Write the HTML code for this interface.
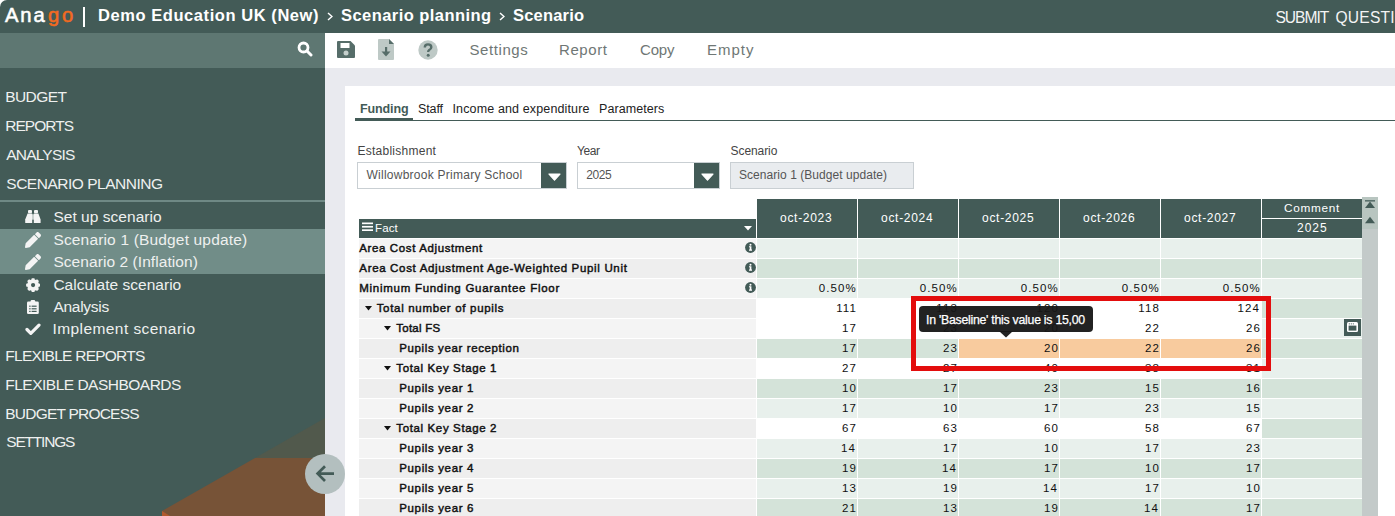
<!DOCTYPE html><html><head><meta charset="utf-8"><style>
*{margin:0;padding:0;box-sizing:border-box}
html,body{width:1395px;height:516px;overflow:hidden;background:#e9eaef;font-family:"Liberation Sans", sans-serif}
.a{position:absolute}
.t{position:absolute;white-space:nowrap;line-height:1}
</style></head><body>
<div class="a" style="left:0px;top:0px;width:10px;height:10px;background:#ffffff;"></div>
<div class="a" style="left:0px;top:0px;width:1395px;height:33px;background:#435b57;border-top-left-radius:7px"></div>
<div class="t" style="left:4.90px;top:4.70px;font-size:20.2px;color:#fff;font-weight:normal;letter-spacing:2.004px;-webkit-text-stroke:0.55px #fff">Ana</div>
<div class="t" style="left:47.90px;top:4.70px;font-size:20.2px;color:#f36a21;font-weight:normal;letter-spacing:2.973px;-webkit-text-stroke:0.55px #f36a21">go</div>
<div class="a" style="left:83px;top:7px;width:2px;height:20px;background:#fff;"></div>
<div class="t" style="left:98.00px;top:6.75px;font-size:16.5px;color:#fff;font-weight:bold;letter-spacing:0.564px;">Demo Education UK (New)</div>
<div class="t" style="left:341.00px;top:6.75px;font-size:16.5px;color:#fff;font-weight:bold;letter-spacing:0.441px;">Scenario planning</div>
<div class="t" style="left:513.00px;top:6.75px;font-size:16.5px;color:#fff;font-weight:bold;letter-spacing:0.197px;">Scenario</div>
<svg class="a" style="left:327px;top:12px" width="6" height="9" viewBox="0 0 6 9"><path d="M1 1 L5 4.5 L1 8" fill="none" stroke="#fff" stroke-width="1.5"/></svg>
<svg class="a" style="left:499px;top:12px" width="6" height="9" viewBox="0 0 6 9"><path d="M1 1 L5 4.5 L1 8" fill="none" stroke="#fff" stroke-width="1.5"/></svg>
<div class="t" style="left:1275.50px;top:9.70px;font-size:15.6px;color:#f4f4f4;font-weight:normal;letter-spacing:-1.037px;">SUBMIT</div>
<div class="t" style="left:1335.50px;top:9.70px;font-size:15.6px;color:#f4f4f4;font-weight:normal;letter-spacing:0.200px;">QUESTION</div>
<div class="a" style="left:0px;top:33px;width:325px;height:483px;background:#435b57;"></div>
<div class="a" style="left:0px;top:33px;width:325px;height:35px;background:#5e7772;"></div>
<svg class="a" style="left:297px;top:41px" width="16" height="16" viewBox="0 0 16 16"><circle cx="6.5" cy="6.5" r="4.5" fill="none" stroke="#fff" stroke-width="2.8"/><line x1="10" y1="10" x2="14" y2="14" stroke="#fff" stroke-width="3" stroke-linecap="round"/></svg>
<div class="t" style="left:5.30px;top:89.05px;font-size:15.5px;color:#eef0ef;font-weight:normal;letter-spacing:-0.604px;">BUDGET</div>
<div class="t" style="left:5.30px;top:117.85px;font-size:15.5px;color:#eef0ef;font-weight:normal;letter-spacing:-0.985px;">REPORTS</div>
<div class="t" style="left:6.30px;top:146.95px;font-size:15.5px;color:#eef0ef;font-weight:normal;letter-spacing:-0.818px;">ANALYSIS</div>
<div class="t" style="left:6.30px;top:176.05px;font-size:15.5px;color:#eef0ef;font-weight:normal;letter-spacing:-0.484px;">SCENARIO PLANNING</div>
<div class="t" style="left:5.30px;top:347.65px;font-size:15.5px;color:#eef0ef;font-weight:normal;letter-spacing:-0.752px;">FLEXIBLE REPORTS</div>
<div class="t" style="left:5.30px;top:376.55px;font-size:15.5px;color:#eef0ef;font-weight:normal;letter-spacing:-0.509px;">FLEXIBLE DASHBOARDS</div>
<div class="t" style="left:5.30px;top:405.75px;font-size:15.5px;color:#eef0ef;font-weight:normal;letter-spacing:-0.781px;">BUDGET PROCESS</div>
<div class="t" style="left:6.30px;top:434.25px;font-size:15.5px;color:#eef0ef;font-weight:normal;letter-spacing:-1.210px;">SETTINGS</div>
<div class="a" style="left:0px;top:200px;width:325px;height:2px;background:#6f8985;"></div>
<div class="a" style="left:0px;top:229px;width:325px;height:45px;background:#718d88;"></div>
<div class="t" style="left:53.40px;top:208.75px;font-size:15.5px;color:#eef0ef;font-weight:normal;letter-spacing:0.037px;">Set up scenario</div>
<div class="t" style="left:53.40px;top:231.75px;font-size:15.5px;color:#eef0ef;font-weight:normal;letter-spacing:0.168px;">Scenario 1 (Budget update)</div>
<div class="t" style="left:53.40px;top:253.75px;font-size:15.5px;color:#eef0ef;font-weight:normal;letter-spacing:0.069px;">Scenario 2 (Inflation)</div>
<div class="t" style="left:53.40px;top:276.65px;font-size:15.5px;color:#eef0ef;font-weight:normal;letter-spacing:0.018px;">Calculate scenario</div>
<div class="t" style="left:53.40px;top:298.95px;font-size:15.5px;color:#eef0ef;font-weight:normal;letter-spacing:-0.281px;">Analysis</div>
<div class="t" style="left:52.40px;top:321.45px;font-size:15.5px;color:#eef0ef;font-weight:normal;letter-spacing:0.433px;">Implement scenario</div>
<svg class="a" style="left:0;top:33px" width="325" height="483" viewBox="0 33 325 483"><polygon points="255,458 325,418 325,458" fill="#51594c"/><polygon points="162,511 255,458 325,458 325,516 162,516" fill="#775337"/><polygon points="162,511 170,516 162,516" fill="#b0592e"/></svg>
<div class="a" style="left:305px;top:454px;width:40px;height:40px;border-radius:50%;background:#b3bfbf"></div>
<svg class="a" style="left:314px;top:463px" width="22" height="22" viewBox="0 0 22 22"><path d="M11 3.2 L3.6 10.6 L11 18 M3.6 10.6 L20 10.6" fill="none" stroke="#435b57" stroke-width="2.7"/></svg>
<div class="a" style="left:325px;top:33px;width:1070px;height:35px;background:#fff;"></div>
<div class="t" style="left:469.50px;top:41.90px;font-size:15px;color:#6f7775;font-weight:normal;letter-spacing:0.586px;">Settings</div>
<div class="t" style="left:559.00px;top:41.90px;font-size:15px;color:#6f7775;font-weight:normal;letter-spacing:0.589px;">Report</div>
<div class="t" style="left:640.00px;top:41.90px;font-size:15px;color:#6f7775;font-weight:normal;letter-spacing:-0.172px;">Copy</div>
<div class="t" style="left:707.00px;top:41.90px;font-size:15px;color:#6f7775;font-weight:normal;letter-spacing:0.998px;">Empty</div>
<div class="a" style="left:345px;top:86px;width:1050px;height:430px;background:#fff;"></div>
<div class="t" style="left:360.00px;top:103.05px;font-size:12.5px;color:#435b57;font-weight:bold;letter-spacing:-0.108px;">Funding</div>
<div class="t" style="left:418.00px;top:103.05px;font-size:12.5px;color:#222;font-weight:normal;letter-spacing:-0.127px;">Staff</div>
<div class="t" style="left:452.50px;top:103.05px;font-size:12.5px;color:#222;font-weight:normal;letter-spacing:0.135px;">Income and expenditure</div>
<div class="t" style="left:599.00px;top:103.05px;font-size:12.5px;color:#222;font-weight:normal;letter-spacing:0.072px;">Parameters</div>
<div class="a" style="left:355px;top:120px;width:1040px;height:1px;background:#435b57;"></div>
<div class="a" style="left:355px;top:118px;width:58px;height:3px;background:#435b57;"></div>
<div class="t" style="left:357.40px;top:145.00px;font-size:12px;color:#444;font-weight:normal;letter-spacing:0.264px;">Establishment</div>
<div class="t" style="left:577.00px;top:145.00px;font-size:12px;color:#444;font-weight:normal;letter-spacing:-0.383px;">Year</div>
<div class="t" style="left:730.60px;top:145.00px;font-size:12px;color:#444;font-weight:normal;letter-spacing:-0.084px;">Scenario</div>
<div class="a" style="left:357px;top:162px;width:210px;height:27px;border:1px solid #c9cfd3;background:#fff"></div>
<div class="a" style="left:541px;top:163px;width:25px;height:25px;background:#435b57;"></div>
<svg class="a" style="left:547.5px;top:173px" width="13" height="9" viewBox="0 0 13 9"><polygon points="1,1 12,1 6.5,7.2" fill="#fff" stroke="#fff" stroke-width="1.2" stroke-linejoin="round"/></svg>
<div class="a" style="left:577px;top:162px;width:143px;height:27px;border:1px solid #c9cfd3;background:#fff"></div>
<div class="a" style="left:694px;top:163px;width:25px;height:25px;background:#435b57;"></div>
<svg class="a" style="left:700.5px;top:173px" width="13" height="9" viewBox="0 0 13 9"><polygon points="1,1 12,1 6.5,7.2" fill="#fff" stroke="#fff" stroke-width="1.2" stroke-linejoin="round"/></svg>
<div class="a" style="left:730px;top:162px;width:184px;height:27px;border:1px solid #c9cfd3;background:#e9ecef"></div>
<div class="t" style="left:366.50px;top:169.20px;font-size:12px;color:#555;font-weight:normal;letter-spacing:0.252px;">Willowbrook Primary School</div>
<div class="t" style="left:586.30px;top:169.20px;font-size:12px;color:#555;font-weight:normal;letter-spacing:-0.440px;">2025</div>
<div class="t" style="left:739.00px;top:169.20px;font-size:12px;color:#555;font-weight:normal;letter-spacing:0.049px;">Scenario 1 (Budget update)</div>
<div class="a" style="left:359px;top:219px;width:397px;height:19px;background:#435b57;"></div>
<svg class="a" style="left:362px;top:222px" width="11" height="9" viewBox="0 0 11 9"><rect x="0" y="0.5" width="11" height="1.7" fill="#fff"/><rect x="0" y="3.9" width="11" height="1.7" fill="#fff"/><rect x="0" y="7.3" width="11" height="1.7" fill="#fff"/></svg>
<div class="t" style="left:375.10px;top:223.25px;font-size:11.5px;color:#fff;font-weight:normal;letter-spacing:0.110px;">Fact</div>
<svg class="a" style="left:744px;top:226px" width="8" height="5" viewBox="0 0 8 5"><polygon points="0,0 8,0 4,4.5" fill="#fff"/></svg>
<div class="a" style="left:757px;top:199px;width:100px;height:39px;background:#435b57;"></div>
<div class="t" style="left:780.00px;top:212.10px;font-size:12px;color:#fff;font-weight:normal;letter-spacing:0.711px;">oct-2023</div>
<div class="a" style="left:858px;top:199px;width:100px;height:39px;background:#435b57;"></div>
<div class="t" style="left:881.00px;top:212.10px;font-size:12px;color:#fff;font-weight:normal;letter-spacing:0.711px;">oct-2024</div>
<div class="a" style="left:959px;top:199px;width:100px;height:39px;background:#435b57;"></div>
<div class="t" style="left:982.00px;top:212.10px;font-size:12px;color:#fff;font-weight:normal;letter-spacing:0.711px;">oct-2025</div>
<div class="a" style="left:1060px;top:199px;width:100px;height:39px;background:#435b57;"></div>
<div class="t" style="left:1083.00px;top:212.10px;font-size:12px;color:#fff;font-weight:normal;letter-spacing:0.711px;">oct-2026</div>
<div class="a" style="left:1161px;top:199px;width:100px;height:39px;background:#435b57;"></div>
<div class="t" style="left:1184.00px;top:212.10px;font-size:12px;color:#fff;font-weight:normal;letter-spacing:0.711px;">oct-2027</div>
<div class="a" style="left:1262px;top:199px;width:100px;height:19px;background:#435b57;"></div>
<div class="a" style="left:1262px;top:219px;width:100px;height:19px;background:#435b57;"></div>
<div class="t" style="left:1284.00px;top:203.10px;font-size:11.8px;color:#fff;font-weight:normal;letter-spacing:0.691px;">Comment</div>
<div class="t" style="left:1297.00px;top:222.20px;font-size:12px;color:#fff;font-weight:normal;letter-spacing:0.993px;">2025</div>
<div class="a" style="left:359px;top:239px;width:397px;height:19px;background:#f4f4f4;"></div>
<div class="a" style="left:757px;top:239px;width:100px;height:19px;background:#e8f0ec;"></div>
<div class="a" style="left:858px;top:239px;width:100px;height:19px;background:#e8f0ec;"></div>
<div class="a" style="left:959px;top:239px;width:100px;height:19px;background:#e8f0ec;"></div>
<div class="a" style="left:1060px;top:239px;width:100px;height:19px;background:#e8f0ec;"></div>
<div class="a" style="left:1161px;top:239px;width:100px;height:19px;background:#e8f0ec;"></div>
<div class="a" style="left:1262px;top:239px;width:100px;height:19px;background:#e8f0ec;"></div>
<svg class="a" style="left:745px;top:242.2px" width="11" height="11" viewBox="0 0 11 11"><circle cx="5.5" cy="5.5" r="5.4" fill="#435b57"/><path d="M4 4.2 H6.4 V7.6 H7 V8.7 H4 V7.6 H4.7 V5.3 H4 Z" fill="#fff"/><circle cx="5.5" cy="2.7" r="1" fill="#fff"/></svg>
<div class="t" style="left:359.30px;top:243.45px;font-size:11.5px;color:#111;font-weight:normal;letter-spacing:0.618px;-webkit-text-stroke:0.45px #111">Area Cost Adjustment</div>
<div class="a" style="left:359px;top:259px;width:397px;height:19px;background:#eeeeee;"></div>
<div class="a" style="left:757px;top:259px;width:100px;height:19px;background:#d4e3d9;"></div>
<div class="a" style="left:858px;top:259px;width:100px;height:19px;background:#d4e3d9;"></div>
<div class="a" style="left:959px;top:259px;width:100px;height:19px;background:#d4e3d9;"></div>
<div class="a" style="left:1060px;top:259px;width:100px;height:19px;background:#d4e3d9;"></div>
<div class="a" style="left:1161px;top:259px;width:100px;height:19px;background:#d4e3d9;"></div>
<div class="a" style="left:1262px;top:259px;width:100px;height:19px;background:#d4e3d9;"></div>
<svg class="a" style="left:745px;top:262.2px" width="11" height="11" viewBox="0 0 11 11"><circle cx="5.5" cy="5.5" r="5.4" fill="#435b57"/><path d="M4 4.2 H6.4 V7.6 H7 V8.7 H4 V7.6 H4.7 V5.3 H4 Z" fill="#fff"/><circle cx="5.5" cy="2.7" r="1" fill="#fff"/></svg>
<div class="t" style="left:359.30px;top:263.45px;font-size:11.5px;color:#111;font-weight:normal;letter-spacing:0.667px;-webkit-text-stroke:0.45px #111">Area Cost Adjustment Age-Weighted Pupil Unit</div>
<div class="a" style="left:359px;top:279px;width:397px;height:19px;background:#f4f4f4;"></div>
<div class="a" style="left:757px;top:279px;width:100px;height:19px;background:#e8f0ec;"></div>
<div class="t" style="left:818.72px;top:283.05px;font-size:11.5px;color:#111;font-weight:normal;letter-spacing:1.100px;">0.50%</div>
<div class="a" style="left:858px;top:279px;width:100px;height:19px;background:#e8f0ec;"></div>
<div class="t" style="left:919.72px;top:283.05px;font-size:11.5px;color:#111;font-weight:normal;letter-spacing:1.100px;">0.50%</div>
<div class="a" style="left:959px;top:279px;width:100px;height:19px;background:#e8f0ec;"></div>
<div class="t" style="left:1020.72px;top:283.05px;font-size:11.5px;color:#111;font-weight:normal;letter-spacing:1.100px;">0.50%</div>
<div class="a" style="left:1060px;top:279px;width:100px;height:19px;background:#e8f0ec;"></div>
<div class="t" style="left:1121.72px;top:283.05px;font-size:11.5px;color:#111;font-weight:normal;letter-spacing:1.100px;">0.50%</div>
<div class="a" style="left:1161px;top:279px;width:100px;height:19px;background:#e8f0ec;"></div>
<div class="t" style="left:1222.72px;top:283.05px;font-size:11.5px;color:#111;font-weight:normal;letter-spacing:1.100px;">0.50%</div>
<div class="a" style="left:1262px;top:279px;width:100px;height:19px;background:#e8f0ec;"></div>
<svg class="a" style="left:745px;top:282.2px" width="11" height="11" viewBox="0 0 11 11"><circle cx="5.5" cy="5.5" r="5.4" fill="#435b57"/><path d="M4 4.2 H6.4 V7.6 H7 V8.7 H4 V7.6 H4.7 V5.3 H4 Z" fill="#fff"/><circle cx="5.5" cy="2.7" r="1" fill="#fff"/></svg>
<div class="t" style="left:359.30px;top:283.45px;font-size:11.5px;color:#111;font-weight:normal;letter-spacing:0.720px;-webkit-text-stroke:0.45px #111">Minimum Funding Guarantee Floor</div>
<div class="a" style="left:359px;top:299px;width:397px;height:19px;background:#eeeeee;"></div>
<div class="a" style="left:757px;top:299px;width:100px;height:19px;background:#ffffff;"></div>
<div class="t" style="left:836.22px;top:303.05px;font-size:11.5px;color:#111;font-weight:normal;letter-spacing:1.100px;">111</div>
<div class="a" style="left:858px;top:299px;width:100px;height:19px;background:#ffffff;"></div>
<div class="t" style="left:936.36px;top:303.05px;font-size:11.5px;color:#111;font-weight:normal;letter-spacing:1.100px;">113</div>
<div class="a" style="left:959px;top:299px;width:100px;height:19px;background:#ffffff;"></div>
<div class="t" style="left:1036.51px;top:303.05px;font-size:11.5px;color:#111;font-weight:normal;letter-spacing:1.100px;">120</div>
<div class="a" style="left:1060px;top:299px;width:100px;height:19px;background:#ffffff;"></div>
<div class="t" style="left:1138.36px;top:303.05px;font-size:11.5px;color:#111;font-weight:normal;letter-spacing:1.100px;">118</div>
<div class="a" style="left:1161px;top:299px;width:100px;height:19px;background:#ffffff;"></div>
<div class="t" style="left:1237.51px;top:303.05px;font-size:11.5px;color:#111;font-weight:normal;letter-spacing:1.100px;">124</div>
<div class="a" style="left:1262px;top:299px;width:100px;height:19px;background:#d4e3d9;"></div>
<svg class="a" style="left:364.7px;top:306px" width="7" height="5" viewBox="0 0 7 5"><polygon points="0,0 7,0 3.5,4.5" fill="#111"/></svg>
<div class="t" style="left:376.70px;top:303.45px;font-size:11.5px;color:#111;font-weight:normal;letter-spacing:0.683px;-webkit-text-stroke:0.45px #111">Total number of pupils</div>
<div class="a" style="left:359px;top:319px;width:397px;height:19px;background:#f4f4f4;"></div>
<div class="a" style="left:757px;top:319px;width:100px;height:19px;background:#ffffff;"></div>
<div class="t" style="left:842.00px;top:323.05px;font-size:11.5px;color:#111;font-weight:normal;letter-spacing:1.100px;">17</div>
<div class="a" style="left:858px;top:319px;width:100px;height:19px;background:#ffffff;"></div>
<div class="t" style="left:943.00px;top:323.05px;font-size:11.5px;color:#111;font-weight:normal;letter-spacing:1.100px;">23</div>
<div class="a" style="left:959px;top:319px;width:100px;height:19px;background:#ffffff;"></div>
<div class="t" style="left:1044.00px;top:323.05px;font-size:11.5px;color:#111;font-weight:normal;letter-spacing:1.100px;">20</div>
<div class="a" style="left:1060px;top:319px;width:100px;height:19px;background:#ffffff;"></div>
<div class="t" style="left:1145.00px;top:323.05px;font-size:11.5px;color:#111;font-weight:normal;letter-spacing:1.100px;">22</div>
<div class="a" style="left:1161px;top:319px;width:100px;height:19px;background:#ffffff;"></div>
<div class="t" style="left:1246.00px;top:323.05px;font-size:11.5px;color:#111;font-weight:normal;letter-spacing:1.100px;">26</div>
<div class="a" style="left:1262px;top:319px;width:100px;height:19px;background:#e8f0ec;"></div>
<svg class="a" style="left:384.3px;top:326px" width="7" height="5" viewBox="0 0 7 5"><polygon points="0,0 7,0 3.5,4.5" fill="#111"/></svg>
<div class="t" style="left:396.30px;top:323.45px;font-size:11.5px;color:#111;font-weight:normal;letter-spacing:0.241px;-webkit-text-stroke:0.45px #111">Total FS</div>
<div class="a" style="left:359px;top:339px;width:397px;height:19px;background:#eeeeee;"></div>
<div class="a" style="left:757px;top:339px;width:100px;height:19px;background:#d4e3d9;"></div>
<div class="t" style="left:842.00px;top:343.05px;font-size:11.5px;color:#111;font-weight:normal;letter-spacing:1.100px;">17</div>
<div class="a" style="left:858px;top:339px;width:100px;height:19px;background:#d4e3d9;"></div>
<div class="t" style="left:943.00px;top:343.05px;font-size:11.5px;color:#111;font-weight:normal;letter-spacing:1.100px;">23</div>
<div class="a" style="left:959px;top:339px;width:100px;height:19px;background:#f8cb9e;"></div>
<div class="t" style="left:1044.00px;top:343.05px;font-size:11.5px;color:#111;font-weight:normal;letter-spacing:1.100px;">20</div>
<div class="a" style="left:1060px;top:339px;width:100px;height:19px;background:#f8cb9e;"></div>
<div class="t" style="left:1145.00px;top:343.05px;font-size:11.5px;color:#111;font-weight:normal;letter-spacing:1.100px;">22</div>
<div class="a" style="left:1161px;top:339px;width:100px;height:19px;background:#f8cb9e;"></div>
<div class="t" style="left:1246.00px;top:343.05px;font-size:11.5px;color:#111;font-weight:normal;letter-spacing:1.100px;">26</div>
<div class="a" style="left:1262px;top:339px;width:100px;height:19px;background:#d4e3d9;"></div>
<div class="t" style="left:399.30px;top:343.45px;font-size:11.5px;color:#111;font-weight:normal;letter-spacing:0.610px;-webkit-text-stroke:0.45px #111">Pupils year reception</div>
<div class="a" style="left:359px;top:359px;width:397px;height:19px;background:#f4f4f4;"></div>
<div class="a" style="left:757px;top:359px;width:100px;height:19px;background:#ffffff;"></div>
<div class="t" style="left:842.00px;top:363.05px;font-size:11.5px;color:#111;font-weight:normal;letter-spacing:1.100px;">27</div>
<div class="a" style="left:858px;top:359px;width:100px;height:19px;background:#ffffff;"></div>
<div class="t" style="left:943.00px;top:363.05px;font-size:11.5px;color:#111;font-weight:normal;letter-spacing:1.100px;">27</div>
<div class="a" style="left:959px;top:359px;width:100px;height:19px;background:#ffffff;"></div>
<div class="t" style="left:1044.00px;top:363.05px;font-size:11.5px;color:#111;font-weight:normal;letter-spacing:1.100px;">40</div>
<div class="a" style="left:1060px;top:359px;width:100px;height:19px;background:#ffffff;"></div>
<div class="t" style="left:1145.00px;top:363.05px;font-size:11.5px;color:#111;font-weight:normal;letter-spacing:1.100px;">38</div>
<div class="a" style="left:1161px;top:359px;width:100px;height:19px;background:#ffffff;"></div>
<div class="t" style="left:1246.00px;top:363.05px;font-size:11.5px;color:#111;font-weight:normal;letter-spacing:1.100px;">31</div>
<div class="a" style="left:1262px;top:359px;width:100px;height:19px;background:#e8f0ec;"></div>
<svg class="a" style="left:384.3px;top:366px" width="7" height="5" viewBox="0 0 7 5"><polygon points="0,0 7,0 3.5,4.5" fill="#111"/></svg>
<div class="t" style="left:396.30px;top:363.45px;font-size:11.5px;color:#111;font-weight:normal;letter-spacing:0.630px;-webkit-text-stroke:0.45px #111">Total Key Stage 1</div>
<div class="a" style="left:359px;top:379px;width:397px;height:19px;background:#eeeeee;"></div>
<div class="a" style="left:757px;top:379px;width:100px;height:19px;background:#d4e3d9;"></div>
<div class="t" style="left:842.00px;top:383.05px;font-size:11.5px;color:#111;font-weight:normal;letter-spacing:1.100px;">10</div>
<div class="a" style="left:858px;top:379px;width:100px;height:19px;background:#d4e3d9;"></div>
<div class="t" style="left:943.00px;top:383.05px;font-size:11.5px;color:#111;font-weight:normal;letter-spacing:1.100px;">17</div>
<div class="a" style="left:959px;top:379px;width:100px;height:19px;background:#d4e3d9;"></div>
<div class="t" style="left:1044.00px;top:383.05px;font-size:11.5px;color:#111;font-weight:normal;letter-spacing:1.100px;">23</div>
<div class="a" style="left:1060px;top:379px;width:100px;height:19px;background:#d4e3d9;"></div>
<div class="t" style="left:1145.00px;top:383.05px;font-size:11.5px;color:#111;font-weight:normal;letter-spacing:1.100px;">15</div>
<div class="a" style="left:1161px;top:379px;width:100px;height:19px;background:#d4e3d9;"></div>
<div class="t" style="left:1246.00px;top:383.05px;font-size:11.5px;color:#111;font-weight:normal;letter-spacing:1.100px;">16</div>
<div class="a" style="left:1262px;top:379px;width:100px;height:19px;background:#d4e3d9;"></div>
<div class="t" style="left:399.30px;top:383.45px;font-size:11.5px;color:#111;font-weight:normal;letter-spacing:0.630px;-webkit-text-stroke:0.45px #111">Pupils year 1</div>
<div class="a" style="left:359px;top:399px;width:397px;height:19px;background:#f4f4f4;"></div>
<div class="a" style="left:757px;top:399px;width:100px;height:19px;background:#e8f0ec;"></div>
<div class="t" style="left:842.00px;top:403.05px;font-size:11.5px;color:#111;font-weight:normal;letter-spacing:1.100px;">17</div>
<div class="a" style="left:858px;top:399px;width:100px;height:19px;background:#e8f0ec;"></div>
<div class="t" style="left:943.00px;top:403.05px;font-size:11.5px;color:#111;font-weight:normal;letter-spacing:1.100px;">10</div>
<div class="a" style="left:959px;top:399px;width:100px;height:19px;background:#e8f0ec;"></div>
<div class="t" style="left:1044.00px;top:403.05px;font-size:11.5px;color:#111;font-weight:normal;letter-spacing:1.100px;">17</div>
<div class="a" style="left:1060px;top:399px;width:100px;height:19px;background:#e8f0ec;"></div>
<div class="t" style="left:1145.00px;top:403.05px;font-size:11.5px;color:#111;font-weight:normal;letter-spacing:1.100px;">23</div>
<div class="a" style="left:1161px;top:399px;width:100px;height:19px;background:#e8f0ec;"></div>
<div class="t" style="left:1246.00px;top:403.05px;font-size:11.5px;color:#111;font-weight:normal;letter-spacing:1.100px;">15</div>
<div class="a" style="left:1262px;top:399px;width:100px;height:19px;background:#e8f0ec;"></div>
<div class="t" style="left:399.30px;top:403.45px;font-size:11.5px;color:#111;font-weight:normal;letter-spacing:0.630px;-webkit-text-stroke:0.45px #111">Pupils year 2</div>
<div class="a" style="left:359px;top:419px;width:397px;height:19px;background:#eeeeee;"></div>
<div class="a" style="left:757px;top:419px;width:100px;height:19px;background:#ffffff;"></div>
<div class="t" style="left:842.00px;top:423.05px;font-size:11.5px;color:#111;font-weight:normal;letter-spacing:1.100px;">67</div>
<div class="a" style="left:858px;top:419px;width:100px;height:19px;background:#ffffff;"></div>
<div class="t" style="left:943.00px;top:423.05px;font-size:11.5px;color:#111;font-weight:normal;letter-spacing:1.100px;">63</div>
<div class="a" style="left:959px;top:419px;width:100px;height:19px;background:#ffffff;"></div>
<div class="t" style="left:1044.00px;top:423.05px;font-size:11.5px;color:#111;font-weight:normal;letter-spacing:1.100px;">60</div>
<div class="a" style="left:1060px;top:419px;width:100px;height:19px;background:#ffffff;"></div>
<div class="t" style="left:1145.00px;top:423.05px;font-size:11.5px;color:#111;font-weight:normal;letter-spacing:1.100px;">58</div>
<div class="a" style="left:1161px;top:419px;width:100px;height:19px;background:#ffffff;"></div>
<div class="t" style="left:1246.00px;top:423.05px;font-size:11.5px;color:#111;font-weight:normal;letter-spacing:1.100px;">67</div>
<div class="a" style="left:1262px;top:419px;width:100px;height:19px;background:#d4e3d9;"></div>
<svg class="a" style="left:384.3px;top:426px" width="7" height="5" viewBox="0 0 7 5"><polygon points="0,0 7,0 3.5,4.5" fill="#111"/></svg>
<div class="t" style="left:396.30px;top:423.45px;font-size:11.5px;color:#111;font-weight:normal;letter-spacing:0.630px;-webkit-text-stroke:0.45px #111">Total Key Stage 2</div>
<div class="a" style="left:359px;top:439px;width:397px;height:19px;background:#f4f4f4;"></div>
<div class="a" style="left:757px;top:439px;width:100px;height:19px;background:#e8f0ec;"></div>
<div class="t" style="left:841.00px;top:443.05px;font-size:11.5px;color:#111;font-weight:normal;letter-spacing:1.100px;">14</div>
<div class="a" style="left:858px;top:439px;width:100px;height:19px;background:#e8f0ec;"></div>
<div class="t" style="left:943.00px;top:443.05px;font-size:11.5px;color:#111;font-weight:normal;letter-spacing:1.100px;">17</div>
<div class="a" style="left:959px;top:439px;width:100px;height:19px;background:#e8f0ec;"></div>
<div class="t" style="left:1044.00px;top:443.05px;font-size:11.5px;color:#111;font-weight:normal;letter-spacing:1.100px;">10</div>
<div class="a" style="left:1060px;top:439px;width:100px;height:19px;background:#e8f0ec;"></div>
<div class="t" style="left:1145.00px;top:443.05px;font-size:11.5px;color:#111;font-weight:normal;letter-spacing:1.100px;">17</div>
<div class="a" style="left:1161px;top:439px;width:100px;height:19px;background:#e8f0ec;"></div>
<div class="t" style="left:1246.00px;top:443.05px;font-size:11.5px;color:#111;font-weight:normal;letter-spacing:1.100px;">23</div>
<div class="a" style="left:1262px;top:439px;width:100px;height:19px;background:#e8f0ec;"></div>
<div class="t" style="left:399.30px;top:443.45px;font-size:11.5px;color:#111;font-weight:normal;letter-spacing:0.630px;-webkit-text-stroke:0.45px #111">Pupils year 3</div>
<div class="a" style="left:359px;top:459px;width:397px;height:19px;background:#eeeeee;"></div>
<div class="a" style="left:757px;top:459px;width:100px;height:19px;background:#d4e3d9;"></div>
<div class="t" style="left:842.00px;top:463.05px;font-size:11.5px;color:#111;font-weight:normal;letter-spacing:1.100px;">19</div>
<div class="a" style="left:858px;top:459px;width:100px;height:19px;background:#d4e3d9;"></div>
<div class="t" style="left:942.00px;top:463.05px;font-size:11.5px;color:#111;font-weight:normal;letter-spacing:1.100px;">14</div>
<div class="a" style="left:959px;top:459px;width:100px;height:19px;background:#d4e3d9;"></div>
<div class="t" style="left:1044.00px;top:463.05px;font-size:11.5px;color:#111;font-weight:normal;letter-spacing:1.100px;">17</div>
<div class="a" style="left:1060px;top:459px;width:100px;height:19px;background:#d4e3d9;"></div>
<div class="t" style="left:1145.00px;top:463.05px;font-size:11.5px;color:#111;font-weight:normal;letter-spacing:1.100px;">10</div>
<div class="a" style="left:1161px;top:459px;width:100px;height:19px;background:#d4e3d9;"></div>
<div class="t" style="left:1246.00px;top:463.05px;font-size:11.5px;color:#111;font-weight:normal;letter-spacing:1.100px;">17</div>
<div class="a" style="left:1262px;top:459px;width:100px;height:19px;background:#d4e3d9;"></div>
<div class="t" style="left:399.30px;top:463.45px;font-size:11.5px;color:#111;font-weight:normal;letter-spacing:0.630px;-webkit-text-stroke:0.45px #111">Pupils year 4</div>
<div class="a" style="left:359px;top:479px;width:397px;height:19px;background:#f4f4f4;"></div>
<div class="a" style="left:757px;top:479px;width:100px;height:19px;background:#e8f0ec;"></div>
<div class="t" style="left:842.00px;top:483.05px;font-size:11.5px;color:#111;font-weight:normal;letter-spacing:1.100px;">13</div>
<div class="a" style="left:858px;top:479px;width:100px;height:19px;background:#e8f0ec;"></div>
<div class="t" style="left:943.00px;top:483.05px;font-size:11.5px;color:#111;font-weight:normal;letter-spacing:1.100px;">19</div>
<div class="a" style="left:959px;top:479px;width:100px;height:19px;background:#e8f0ec;"></div>
<div class="t" style="left:1043.00px;top:483.05px;font-size:11.5px;color:#111;font-weight:normal;letter-spacing:1.100px;">14</div>
<div class="a" style="left:1060px;top:479px;width:100px;height:19px;background:#e8f0ec;"></div>
<div class="t" style="left:1145.00px;top:483.05px;font-size:11.5px;color:#111;font-weight:normal;letter-spacing:1.100px;">17</div>
<div class="a" style="left:1161px;top:479px;width:100px;height:19px;background:#e8f0ec;"></div>
<div class="t" style="left:1246.00px;top:483.05px;font-size:11.5px;color:#111;font-weight:normal;letter-spacing:1.100px;">10</div>
<div class="a" style="left:1262px;top:479px;width:100px;height:19px;background:#e8f0ec;"></div>
<div class="t" style="left:399.30px;top:483.45px;font-size:11.5px;color:#111;font-weight:normal;letter-spacing:0.630px;-webkit-text-stroke:0.45px #111">Pupils year 5</div>
<div class="a" style="left:359px;top:499px;width:397px;height:19px;background:#eeeeee;"></div>
<div class="a" style="left:757px;top:499px;width:100px;height:19px;background:#d4e3d9;"></div>
<div class="t" style="left:842.00px;top:503.05px;font-size:11.5px;color:#111;font-weight:normal;letter-spacing:1.100px;">21</div>
<div class="a" style="left:858px;top:499px;width:100px;height:19px;background:#d4e3d9;"></div>
<div class="t" style="left:943.00px;top:503.05px;font-size:11.5px;color:#111;font-weight:normal;letter-spacing:1.100px;">13</div>
<div class="a" style="left:959px;top:499px;width:100px;height:19px;background:#d4e3d9;"></div>
<div class="t" style="left:1044.00px;top:503.05px;font-size:11.5px;color:#111;font-weight:normal;letter-spacing:1.100px;">19</div>
<div class="a" style="left:1060px;top:499px;width:100px;height:19px;background:#d4e3d9;"></div>
<div class="t" style="left:1144.00px;top:503.05px;font-size:11.5px;color:#111;font-weight:normal;letter-spacing:1.100px;">14</div>
<div class="a" style="left:1161px;top:499px;width:100px;height:19px;background:#d4e3d9;"></div>
<div class="t" style="left:1246.00px;top:503.05px;font-size:11.5px;color:#111;font-weight:normal;letter-spacing:1.100px;">17</div>
<div class="a" style="left:1262px;top:499px;width:100px;height:19px;background:#d4e3d9;"></div>
<div class="t" style="left:399.30px;top:503.45px;font-size:11.5px;color:#111;font-weight:normal;letter-spacing:0.630px;-webkit-text-stroke:0.45px #111">Pupils year 6</div>
<div class="a" style="left:1344px;top:319px;width:17px;height:17px;background:#435b57;"></div>
<svg class="a" style="left:1347px;top:321.5px" width="11" height="10" viewBox="0 0 11 10"><rect x="0" y="0" width="11" height="10" rx="1.5" fill="#fff"/><rect x="1.6" y="3.6" width="7.8" height="5" fill="#435b57"/><circle cx="2.3" cy="1.8" r="0.6" fill="#435b57"/><circle cx="4.3" cy="1.8" r="0.6" fill="#435b57"/><circle cx="6.3" cy="1.8" r="0.6" fill="#435b57"/></svg>
<div class="a" style="left:1362px;top:197px;width:16px;height:319px;background:#c3cac9;"></div>
<div class="a" style="left:1362px;top:197px;width:16px;height:32px;background:#b8c5c0;"></div>
<svg class="a" style="left:1363px;top:199px" width="14" height="28" viewBox="0 0 14 28"><rect x="2" y="1.2" width="10" height="1.3" fill="#435b57"/><polygon points="2,8.9 12,8.9 7,2.4" fill="#435b57"/><polygon points="2,24.2 12,24.2 7,17.8" fill="#435b57"/></svg>
<div class="a" style="left:911px;top:296px;width:360px;height:75px;border:5px solid #e30d0d"></div>
<div class="a" style="left:919px;top:306px;width:174px;height:26px;border-radius:4px;background:rgba(22,22,22,0.95)"></div>
<svg class="a" style="left:999px;top:331px" width="14" height="7" viewBox="0 0 14 7"><polygon points="0,0 14,0 7,6.5" fill="rgba(22,22,22,0.95)"/></svg>
<div class="t" style="left:926.00px;top:314.15px;font-size:12.3px;color:#fff;font-weight:normal;letter-spacing:-0.258px;-webkit-text-stroke:0.25px #fff">In 'Baseline' this value is 15,00</div>
<svg class="a" style="left:337px;top:41px" width="18" height="17" viewBox="0 0 18 17"><path d="M1 0 H13.5 L18 4.5 V16 Q18 17 17 17 H1 Q0 17 0 16 V1 Q0 0 1 0 Z" fill="#566d69"/><rect x="3.5" y="2" width="9" height="5" fill="#fff"/><circle cx="9" cy="12" r="2.5" fill="#c5cfcc"/></svg>
<svg class="a" style="left:378px;top:39px" width="16" height="21" viewBox="0 0 16 21"><path d="M1 0 H11 L16 5 V20 Q16 21 15 21 H1 Q0 21 0 20 V1 Q0 0 1 0 Z" fill="#bec9c6"/><polygon points="11,0 16,5 11,5" fill="#566d69"/><rect x="7" y="8" width="2.2" height="6" fill="#566d69"/><polygon points="3.5,12.5 12.5,12.5 8,17.5" fill="#566d69"/></svg>
<svg class="a" style="left:418px;top:40px" width="20" height="20" viewBox="0 0 20 20"><circle cx="10" cy="10" r="9.7" fill="#bec9c6"/><path d="M6.8 7.6 Q6.8 4.4 10 4.4 Q13.3 4.4 13.3 7.3 Q13.3 9 11.2 10 Q10.2 10.6 10.2 12" fill="none" stroke="#566d69" stroke-width="2.4"/><circle cx="10.2" cy="15.3" r="1.5" fill="#566d69"/></svg>
<svg class="a" style="left:25px;top:210px" width="16" height="14" viewBox="0 0 16 14"><rect x="3" y="0" width="4" height="3.2" rx="1" fill="#f4f4f4"/><rect x="9" y="0" width="4" height="3.2" rx="1" fill="#f4f4f4"/><path d="M2.6 3.6 H7.2 V13 H0.6 Q0.2 13 0.2 12.5 V9.5 Z" fill="#f4f4f4"/><path d="M13.4 3.6 H8.8 V13 H15.2 Q15.6 13 15.6 12.5 V9.5 Z" fill="#f4f4f4"/><rect x="7" y="4.2" width="2" height="5.5" fill="#c9d0ce"/></svg>
<svg class="a" style="left:25px;top:232px" width="16" height="16" viewBox="0 0 512 512"><g transform="translate(0,0)"><path d="M497.9 142.1l-46.1 46.1c-4.7 4.7-12.3 4.7-17 0l-111-111c-4.7-4.7-4.7-12.3 0-17l46.1-46.1c18.7-18.7 49.1-18.7 67.9 0l60.1 60.1c18.8 18.7 18.8 49.1 0 67.9zM284.2 99.8L21.6 362.4.4 483.9c-2.9 16.4 11.4 30.6 27.8 27.8l121.5-21.3 262.6-262.6c4.7-4.7 4.7-12.3 0-17l-111-111c-4.8-4.7-12.4-4.7-17.1 0z" fill="#f4f4f4"/></g></svg>
<svg class="a" style="left:25px;top:254px" width="16" height="16" viewBox="0 0 512 512"><g transform="translate(0,0)"><path d="M497.9 142.1l-46.1 46.1c-4.7 4.7-12.3 4.7-17 0l-111-111c-4.7-4.7-4.7-12.3 0-17l46.1-46.1c18.7-18.7 49.1-18.7 67.9 0l60.1 60.1c18.8 18.7 18.8 49.1 0 67.9zM284.2 99.8L21.6 362.4.4 483.9c-2.9 16.4 11.4 30.6 27.8 27.8l121.5-21.3 262.6-262.6c4.7-4.7 4.7-12.3 0-17l-111-111c-4.8-4.7-12.4-4.7-17.1 0z" fill="#f4f4f4"/></g></svg>
<svg class="a" style="left:25.9px;top:277.8px" width="14.2" height="14.2" viewBox="0 0 14.2 14.2"><path fill-rule="evenodd" d="M14.07 5.77 L14.07 8.43 L12.77 8.75 L12.27 9.94 L12.97 11.09 L11.09 12.97 L9.94 12.27 L8.75 12.77 L8.43 14.07 L5.77 14.07 L5.45 12.77 L4.26 12.27 L3.11 12.97 L1.23 11.09 L1.93 9.94 L1.43 8.75 L0.13 8.43 L0.13 5.77 L1.43 5.45 L1.93 4.26 L1.23 3.11 L3.11 1.23 L4.26 1.93 L5.45 1.43 L5.77 0.13 L8.43 0.13 L8.75 1.43 L9.94 1.93 L11.09 1.23 L12.97 3.11 L12.27 4.26 L12.77 5.45 Z M7.1 5 A2.1 2.1 0 1 0 7.1 9.2 A2.1 2.1 0 1 0 7.1 5 Z" fill="#f4f4f4"/></svg>
<svg class="a" style="left:27px;top:300px" width="12" height="14" viewBox="0 0 12 14"><rect x="0" y="1.6" width="11.8" height="12.4" rx="1.3" fill="#f4f4f4"/><rect x="3.6" y="0" width="4.6" height="3.4" rx="1.2" fill="#f4f4f4"/><g fill="#435b57"><rect x="2.2" y="5.6" width="1.4" height="1.2"/><rect x="4.6" y="5.6" width="5" height="1.2"/><rect x="2.2" y="8.2" width="1.4" height="1.2"/><rect x="4.6" y="8.2" width="5" height="1.2"/><rect x="2.2" y="10.8" width="1.4" height="1.2"/><rect x="4.6" y="10.8" width="5" height="1.2"/></g></svg>
<svg class="a" style="left:25px;top:323px" width="16" height="13" viewBox="0 0 16 13"><path d="M2 6.5 L5.8 10.3 L14 2.1" fill="none" stroke="#f4f4f4" stroke-width="3.2" stroke-linecap="round" stroke-linejoin="round"/></svg>
</body></html>
